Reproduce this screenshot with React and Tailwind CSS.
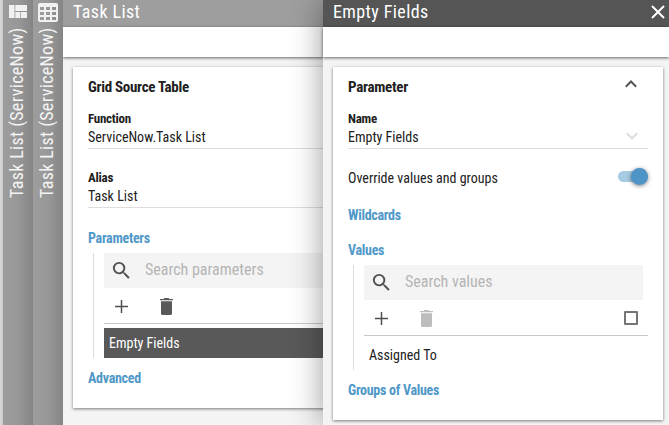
import React from "react";

const SearchIcon = () => (
  <svg viewBox="0 0 24 24" className="ml-[6px] size-[23px] shrink-0 fill-[#505050]">
    <path d="M15.5 14h-.79l-.28-.27A6.47 6.47 0 0 0 16 9.5 6.5 6.5 0 1 0 9.5 16c1.61 0 3.09-.59 4.23-1.57l.27.28v.79l5 4.99L20.49 19l-4.99-5zm-6 0C7.01 14 5 11.99 5 9.5S7.01 5 9.5 5 14 7.01 14 9.5 11.99 14 9.5 14z" />
  </svg>
);

const PlusIcon = () => (
  <svg viewBox="0 0 13 13" className="mt-[1px] ml-[11px] size-[13px] shrink-0 fill-[#505050]">
    <path d="M5.75 0h1.5v5.75H13v1.5H7.25V13h-1.5V7.25H0v-1.5h5.75z" />
  </svg>
);

const TrashIcon = ({ muted }) => (
  <svg viewBox="0 0 13 17" className={`mt-[1px] ml-[32px] h-[17px] w-[13px] shrink-0 ${muted ? "fill-[#bdbdbd]" : "fill-[#595959]"}`}>
    <path d="M0 1h3.500l1-1h4l1 1H13v1.300H0zM1 3.300h11V15.500a1.500 1.500 0 0 1-1.500 1.500h-8a1.500 1.500 0 0 1-1.500-1.500z" />
  </svg>
);

const DashboardIcon = () => (
  <svg viewBox="0 0 18 13" className="h-[13px] w-[18px] fill-[#f1f1f1]">
    <path d="M0 0h5.500v13H0zM6.300 0H18v6H6.300zM6.300 7h5v6h-5zM12 7h6v6h-6z" />
  </svg>
);

const GridIcon = () => (
  <svg viewBox="0 0 20 19" className="h-[19px] w-[20px] fill-[#f3f0f0]">
    <path fillRule="evenodd" d="M2 0h16a2 2 0 0 1 2 2v15a2 2 0 0 1-2 2H2a2 2 0 0 1-2-2V2a2 2 0 0 1 2-2zM2 4v3h4V4zM8 4v3h4V4zM14 4v3h4V4zM2 9v3h4V9zM8 9v3h4V9zM14 9v3h4V9zM2 14v3h4v-3zM8 14v3h4v-3zM14 14v3h4v-3z" />
  </svg>
);

const Chevron = ({ up }) => (
  <svg viewBox="0 0 12 8" className={`h-[8px] w-[12px] shrink-0 fill-none ${up ? "stroke-[#555555]" : "stroke-[#dedede]"}`} strokeWidth="2">
    <path d={up ? "M.8 6.800 6 1.500l5.200 5.300" : "M.8 1.200 6 6.500l5.200-5.300"} />
  </svg>
);

function SideTab({ icon, top }) {
  return (
    <div className="flex w-[30px] shrink-0 flex-col items-center bg-linear-to-r from-[#9d9d9d] via-[#989898] to-[#858585]">
      <div className={`flex h-[24px] items-start ${top}`}>{icon}</div>
      <div className="mt-[3px] mr-[2px] h-[171px] w-[28px] rotate-180 text-[18px] leading-[28px] tracking-[0.34px] whitespace-nowrap text-[#f4f4f4] [writing-mode:vertical-rl]">
        Task List (ServiceNow)
      </div>
    </div>
  );
}

function PanelTop({ title, color, children }) {
  return (
    <>
      <div className={`flex h-[27px] shrink-0 items-center justify-between pr-[4px] pb-[3px] pl-[10px] text-[18px] leading-[24px] tracking-[0.4px] text-white ${color}`}>
        <span>{title}</span>
        {children}
      </div>
      <div className="h-[30px] shrink-0 bg-white shadow-[0_1px_3px_rgba(0,0,0,0.6)]" />
    </>
  );
}

const Card = ({ children }) => (
  <div className="mt-[10px] ml-[10px] w-[330px] bg-white px-[15px] pb-[15px] shadow-[0_1px_3px_rgba(0,0,0,0.5)]">{children}</div>
);

const CardTitle = ({ children }) => (
  <div className="flex h-[40px] items-center justify-between text-[15px] font-bold tracking-[-0.28px]">{children}</div>
);

function Field({ label, value, children }) {
  return (
    <div>
      <div className="h-[24px] text-[13px] leading-[24px] font-bold tracking-[-0.25px]">{label}</div>
      <div className="flex h-[18px] items-start justify-between border-b border-[#dddddd] text-[14px] leading-[13px]">
        <span>{value}</span>
        {children}
      </div>
    </div>
  );
}

const Section = ({ children, gap }) => (
  <div className={`h-[30px] text-[14px] leading-[31px] font-bold tracking-[-0.28px] text-[#4f98c8] ${gap}`}>{children}</div>
);

function ListBox({ placeholder, muted, checkbox, children }) {
  return (
    <div className="ml-[5px] h-[105px] border-l border-[#dddddd] pl-[10px]">
      <div className="mr-[5px] flex h-[35px] items-center bg-[#f4f4f4]">
        <SearchIcon />
        <span className="mb-[2px] ml-[12px] text-[16px] text-[#b5b5b5]">{placeholder}</span>
      </div>
      <div className="flex h-[36px] items-center border-b border-[#c9c9c9]">
        <PlusIcon />
        <TrashIcon muted={muted} />
        {checkbox && <span className="mr-[10px] ml-auto size-[14px] rounded-[1px] border-2 border-[#757575]" />}
      </div>
      {children}
    </div>
  );
}

export default function App() {
  return (
    <div className="flex h-[425px] w-[669px] overflow-hidden bg-[#d8d8d8] font-[Roboto_Condensed,Roboto,sans-serif] text-[#212121] [font-stretch:75%]">
      <div className="w-[3px] shrink-0 bg-linear-to-r from-[#d9d9d9] to-[#c9c9c9]" />
      <SideTab icon={<DashboardIcon />} top="pt-[5px]" />
      <SideTab icon={<GridIcon />} top="pt-[3px]" />

      <section className="flex w-[260px] shrink-0 flex-col overflow-hidden bg-[#f4f4f4]">
        <PanelTop title="Task List" color="bg-[#9e9e9e]" />
        <Card>
          <CardTitle>Grid Source Table</CardTitle>
          <Field label="Function" value="ServiceNow.Task List" />
          <div className="mt-[17px]">
            <Field label="Alias" value="Task List" />
          </div>
          <Section gap="mt-[15px]">Parameters</Section>
          <ListBox placeholder="Search parameters">
            <div className="mt-[4px] h-[30px] bg-[#595959] px-[5px] text-[14px] leading-[30px] text-white">Empty Fields</div>
          </ListBox>
          <Section gap="mt-[5px]">Advanced</Section>
        </Card>
      </section>

      <section className="relative flex w-[346px] shrink-0 flex-col bg-[#f4f4f4] shadow-[0_0_30px_rgba(0,0,0,0.4)]">
        <PanelTop title="Empty Fields" color="bg-[#555555]">
          <svg viewBox="0 0 14 14" className="size-[14px] fill-none stroke-white" strokeWidth="2">
            <path d="M1 1l12 12M13 1 1 13" />
          </svg>
        </PanelTop>
        <Card>
          <CardTitle>
            <span>Parameter</span>
            <span className="mr-[11px] mb-[6px] flex">
              <Chevron up />
            </span>
          </CardTitle>
          <Field label="Name" value="Empty Fields">
            <span className="mr-[10px] flex pt-[1px]">
              <Chevron />
            </span>
          </Field>
          <div className="mt-[14px] flex h-[30px] items-center justify-between text-[14px]">
            <span>Override values and groups</span>
            <span className="mb-[3px] flex h-[11px] w-[30px] items-center justify-end rounded-full bg-[#a7cbe3]">
              <span className="size-[17px] shrink-0 rounded-full bg-[#4f94c6] shadow-[0_1px_4px_rgba(0,0,0,0.5)]" />
            </span>
          </div>
          <Section gap="mt-[7px]">Wildcards</Section>
          <Section gap="mt-[5px]">Values</Section>
          <ListBox placeholder="Search values" muted checkbox>
            <div className="mt-[4px] h-[30px] px-[5px] text-[14px] leading-[30px]">Assigned To</div>
          </ListBox>
          <Section gap="mt-[5px]">Groups of Values</Section>
        </Card>
      </section>
    </div>
  );
}
